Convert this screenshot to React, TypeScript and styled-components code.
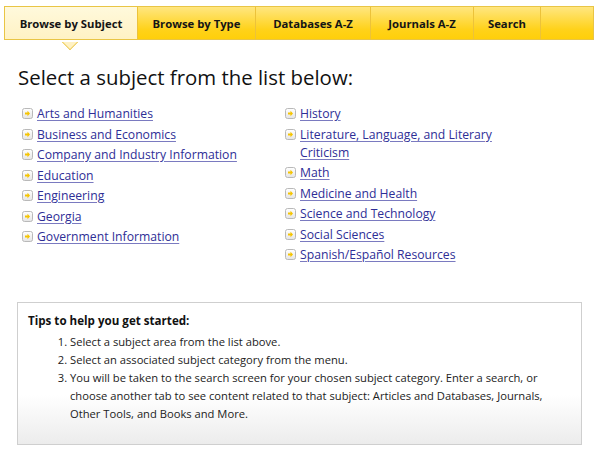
import React from "react";
import styled, { createGlobalStyle } from "styled-components";

const Global = createGlobalStyle`
  html, body { margin: 0; padding: 0; background: #fff; }
  body { font-family: "Open Sans", "DejaVu Sans", sans-serif; color: #111; }
`;

const Page = styled.div`
  width: 600px;
  height: 456px;
  padding: 6px 0 0 4px;
  box-sizing: border-box;
  overflow: hidden;
`;

const TabBar = styled.nav`
  display: flex;
  width: 590px;
  height: 34px;
  box-sizing: border-box;
  border: 1px solid #e9c545;
  background: linear-gradient(#ffe680, #ffd21a 70%, #ffcf0a);
`;

const Tab = styled.div<{ $active?: boolean; $w: number }>`
  position: relative;
  width: ${(p) => p.$w}px;
  box-sizing: border-box;
  display: flex;
  align-items: center;
  justify-content: center;
  font-size: 11.3px;
  font-weight: bold;
  color: #151515;
  border-right: 1px solid #ecc23a;
  background: ${(p) => (p.$active ? "linear-gradient(#fff9dc, #fff2c4)" : "transparent")};
  &:last-child { border-right: none; }
`;

const Pointer = styled.span`
  position: absolute;
  left: 50%;
  bottom: -9px;
  width: 12px;
  height: 12px;
  margin-left: -7px;
  background: #fff2c4;
  border-right: 1px solid #e9c545;
  border-bottom: 1px solid #e9c545;
  transform: rotate(45deg);
  box-sizing: border-box;
  clip-path: polygon(100% 0, 100% 100%, 0 100%);
`;

const Heading = styled.h1`
  margin: 23px 0 0 14px;
  font-size: 20.4px;
  font-weight: normal;
  color: #111;
  line-height: 28px;
`;

const Columns = styled.div`
  display: grid;
  grid-template-columns: 263px 212px;
  margin: 14px 0 0 18px;
`;

const List = styled.ul`
  list-style: none;
  margin: 0;
  padding: 0;
  display: flex;
  flex-direction: column;
  gap: 2.5px;
`;

const Item = styled.li`
  display: flex;
  align-items: flex-start;
  font-size: 12.2px;
  line-height: 18px;
`;

const Link = styled.a`
  color: #2e2e96;
  text-decoration: underline;
  text-decoration-color: #7a7ac0;
  text-underline-offset: 2px;
`;

const IconBox = styled.svg`
  flex: none;
  width: 11px;
  height: 11px;
  margin: 3px 4px 0 0;
`;

const Expand = () => (
  <IconBox viewBox="0 0 11 11">
    <defs>
      <linearGradient id="ig" x1="0" y1="0" x2="0" y2="1">
        <stop offset="0" stopColor="#ffffff" />
        <stop offset="1" stopColor="#e4e4e4" />
      </linearGradient>
    </defs>
    <rect x="0.5" y="0.5" width="10" height="10" rx="2" fill="url(#ig)" stroke="#b9b9b9" />
    <path d="M3 4.5h2.5V2.8L8 5.5 5.5 8.2V6.5H3z" fill="#f5c400" />
  </IconBox>
);

const Tips = styled.section`
  margin: 38px 0 0 13px;
  width: 565px;
  height: 143px;
  box-sizing: border-box;
  border: 1px solid #cfcfcf;
  background: linear-gradient(#fff 0%, #fff 65%, #ececec 100%);
  padding: 9px 10px;
  font-size: 11.2px;
  line-height: 18px;
`;

const TipsTitle = styled.div`
  font-weight: bold;
  font-size: 11.6px;
  color: #111;
`;

const Steps = styled.ol`
  margin: 3px 0 0 0;
  padding-left: 42px;
  color: #222;
`;

const left = [
  "Arts and Humanities",
  "Business and Economics",
  "Company and Industry Information",
  "Education",
  "Engineering",
  "Georgia",
  "Government Information",
];
const right = [
  "History",
  "Literature, Language, and Literary Criticism",
  "Math",
  "Medicine and Health",
  "Science and Technology",
  "Social Sciences",
  "Spanish/Español Resources",
];

const tabs: [string, number][] = [
  ["Browse by Subject", 133],
  ["Browse by Type", 118],
  ["Databases A-Z", 115],
  ["Journals A-Z", 103],
  ["Search", 67],
  ["", 52],
];

export default function App() {
  return (
    <Page>
      <Global />
      <TabBar>
        {tabs.map(([t, w], i) => (
          <Tab key={i} $w={w} $active={i === 0}>
            {t}
            {i === 0 && <Pointer />}
          </Tab>
        ))}
      </TabBar>
      <Heading>Select a subject from the list below:</Heading>
      <Columns>
        {[left, right].map((col, ci) => (
          <List key={ci}>
            {col.map((s) => (
              <Item key={s}>
                <Expand />
                <Link href="#">{s}</Link>
              </Item>
            ))}
          </List>
        ))}
      </Columns>
      <Tips>
        <TipsTitle>Tips to help you get started:</TipsTitle>
        <Steps>
          <li>Select a subject area from the list above.</li>
          <li>Select an associated subject category from the menu.</li>
          <li>
            You will be taken to the search screen for your chosen subject category. Enter a search, or
            choose another tab to see content related to that subject: Articles and Databases, Journals,
            Other Tools, and Books and More.
          </li>
        </Steps>
      </Tips>
    </Page>
  );
}
